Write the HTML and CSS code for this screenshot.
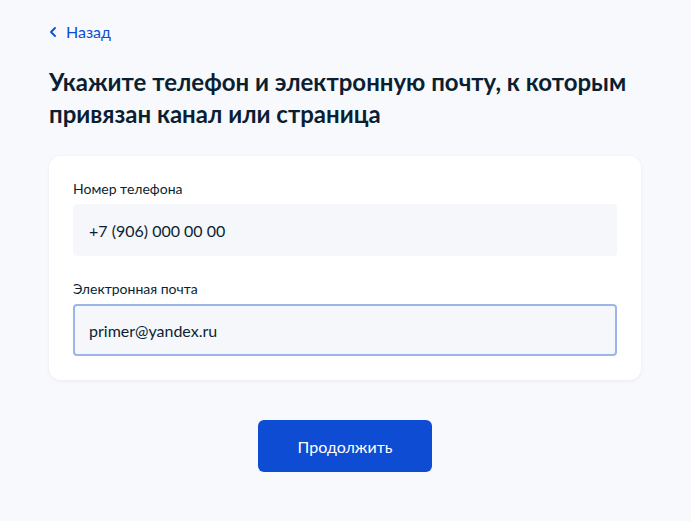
FILE: index.html
```html
<!DOCTYPE html>
<html lang="ru">
<head>
<meta charset="utf-8">
<title>Контакты</title>
<link rel="stylesheet" href="styles.css">
</head>
<body>
<main class="page">
  <a class="back" href="#">
    <svg class="back-icon" width="8" height="10" viewBox="0 0 8 10"><path d="M6 1 L2 5 L6 9" fill="none" stroke="#0d4cd3" stroke-width="1.8" stroke-linecap="round" stroke-linejoin="round"/></svg>
    <span>Назад</span>
  </a>
  <h1 class="title">Укажите телефон и электронную почту, к которым привязан канал или страница</h1>
  <section class="card">
    <label class="field">
      <span class="label">Номер телефона</span>
      <span class="input input-readonly">+7 (906) 000 00 00</span>
    </label>
    <label class="field">
      <span class="label">Электронная почта</span>
      <span class="input input-focus">primer@yandex.ru</span>
    </label>
  </section>
  <div class="actions">
    <button class="btn" type="button">Продолжить</button>
  </div>
</main>
</body>
</html>
```
FILE: styles.css
```css
* { box-sizing: border-box; }
html, body { margin: 0; padding: 0; }
body {
  background: #f8f9fd;
  font-family: Lato, "Noto Sans", sans-serif;
  color: #0b1f33;
}
.page {
  width: 592px;
  margin-left: 49px;
  padding: 22px 0 50px;
}
.back {
  display: flex;
  align-items: center;
  gap: 9px;
  color: #0d4cd3;
  text-decoration: none;
  font-size: 16px;
  line-height: 20px;
}
.back-icon { display: block; }
.title {
  margin: 24px 0 0;
  font-size: 24px;
  line-height: 32px;
  font-weight: 700;
}
.card {
  margin-top: 26px;
  background: #fff;
  border-radius: 12px;
  padding: 24px;
  box-shadow: 0 1px 4px rgba(11, 31, 51, 0.06);
  display: flex;
  flex-direction: column;
  gap: 24px;
}
.field { display: flex; flex-direction: column; }
.label {
  font-size: 14px;
  line-height: 18px;
  margin-bottom: 6px;
}
.input {
  display: flex;
  align-items: center;
  height: 52px;
  padding: 0 14px;
  border-radius: 4px;
  background: #f5f7fa;
  font-size: 16px;
  border: 2px solid transparent;
}
.input-focus {
  border-color: #9db6ea;
}
.actions {
  display: flex;
  justify-content: center;
  margin-top: 40px;
}
.btn {
  width: 174px;
  height: 52px;
  border: none;
  border-radius: 6px;
  background: #0d4cd3;
  color: #fff;
  font-family: Lato, "Noto Sans", sans-serif;
  font-size: 16px;
}
```
